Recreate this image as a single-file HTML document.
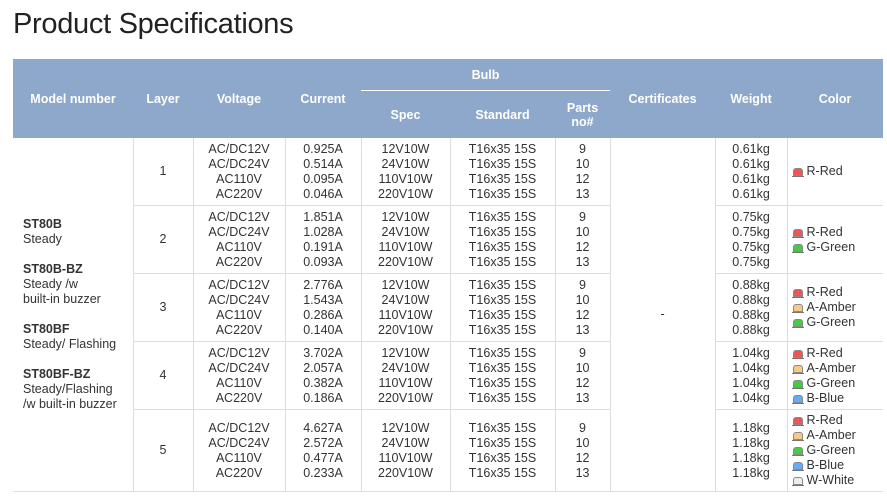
<!DOCTYPE html>
<html><head><meta charset="utf-8"><style>
body{margin:0;background:#fff;font-family:"Liberation Sans",sans-serif;color:#333;width:887px;height:501px;overflow:hidden}
h1{position:absolute;left:13px;top:8px;margin:0;font-weight:normal;font-size:29px;color:#222;letter-spacing:-0.3px}
table{position:absolute;left:13px;top:59px;width:870px;border-collapse:collapse;table-layout:fixed;font-size:12.5px}
th{background:#8ea8cb;color:#fff;font-weight:bold;font-size:12.5px;padding:0}
td{text-align:center;line-height:15px;padding:0;border-left:1px solid #ddd;border-bottom:1px solid #ddd;vertical-align:middle}
td.m{text-align:left;padding-left:10px;border-left:none;line-height:15px}
td.c{text-align:left;padding-left:5px}
tr.r td{height:67px}
tr.r5 td{height:81px}
.l{display:inline-block;width:8px;height:6px;border:1px solid #888;border-radius:3px 3px 0 0;margin-right:4px;vertical-align:-1px;position:relative}
.l:after{content:"";position:absolute;left:-2px;right:-2px;bottom:-2px;height:1px;background:#777}
.R{background:#e55}.A{background:#f5c98a}.G{background:#4c4}.B{background:#6af}.W{background:#eee}
b{color:#333}
</style></head><body>
<h1>Product Specifications</h1>
<table>
<colgroup><col style="width:120px"><col style="width:60px"><col style="width:92px"><col style="width:76px"><col style="width:89px"><col style="width:105px"><col style="width:55px"><col style="width:105px"><col style="width:72px"><col style="width:96px"></colgroup>
<tr><th rowspan="2" style="height:79px">Model number</th><th rowspan="2">Layer</th><th rowspan="2">Voltage</th><th rowspan="2">Current</th><th colspan="3" style="height:31px;border-bottom:1px solid #fff">Bulb</th><th rowspan="2">Certificates</th><th rowspan="2">Weight</th><th rowspan="2">Color</th></tr>
<tr><th style="height:47px">Spec</th><th>Standard</th><th>Parts<br>no#</th></tr>
<tr class="r"><td rowspan="5" class="m"><b>ST80B</b><br>Steady<br><br><b>ST80B-BZ</b><br>Steady /w<br>built-in buzzer<br><br><b>ST80BF</b><br>Steady/ Flashing<br><br><b>ST80BF-BZ</b><br>Steady/Flashing<br>/w built-in buzzer</td>
<td>1</td><td>AC/DC12V<br>AC/DC24V<br>AC110V<br>AC220V</td><td>0.925A<br>0.514A<br>0.095A<br>0.046A</td><td>12V10W<br>24V10W<br>110V10W<br>220V10W</td><td>T16x35 15S<br>T16x35 15S<br>T16x35 15S<br>T16x35 15S</td><td>9<br>10<br>12<br>13</td><td rowspan="5">-</td><td>0.61kg<br>0.61kg<br>0.61kg<br>0.61kg</td><td class="c"><span class="l R"></span>R-Red</td></tr>
<tr class="r"><td>2</td><td>AC/DC12V<br>AC/DC24V<br>AC110V<br>AC220V</td><td>1.851A<br>1.028A<br>0.191A<br>0.093A</td><td>12V10W<br>24V10W<br>110V10W<br>220V10W</td><td>T16x35 15S<br>T16x35 15S<br>T16x35 15S<br>T16x35 15S</td><td>9<br>10<br>12<br>13</td><td>0.75kg<br>0.75kg<br>0.75kg<br>0.75kg</td><td class="c"><span class="l R"></span>R-Red<br><span class="l G"></span>G-Green</td></tr>
<tr class="r"><td>3</td><td>AC/DC12V<br>AC/DC24V<br>AC110V<br>AC220V</td><td>2.776A<br>1.543A<br>0.286A<br>0.140A</td><td>12V10W<br>24V10W<br>110V10W<br>220V10W</td><td>T16x35 15S<br>T16x35 15S<br>T16x35 15S<br>T16x35 15S</td><td>9<br>10<br>12<br>13</td><td>0.88kg<br>0.88kg<br>0.88kg<br>0.88kg</td><td class="c"><span class="l R"></span>R-Red<br><span class="l A"></span>A-Amber<br><span class="l G"></span>G-Green</td></tr>
<tr class="r"><td>4</td><td>AC/DC12V<br>AC/DC24V<br>AC110V<br>AC220V</td><td>3.702A<br>2.057A<br>0.382A<br>0.186A</td><td>12V10W<br>24V10W<br>110V10W<br>220V10W</td><td>T16x35 15S<br>T16x35 15S<br>T16x35 15S<br>T16x35 15S</td><td>9<br>10<br>12<br>13</td><td>1.04kg<br>1.04kg<br>1.04kg<br>1.04kg</td><td class="c"><span class="l R"></span>R-Red<br><span class="l A"></span>A-Amber<br><span class="l G"></span>G-Green<br><span class="l B"></span>B-Blue</td></tr>
<tr class="r5"><td>5</td><td>AC/DC12V<br>AC/DC24V<br>AC110V<br>AC220V</td><td>4.627A<br>2.572A<br>0.477A<br>0.233A</td><td>12V10W<br>24V10W<br>110V10W<br>220V10W</td><td>T16x35 15S<br>T16x35 15S<br>T16x35 15S<br>T16x35 15S</td><td>9<br>10<br>12<br>13</td><td>1.18kg<br>1.18kg<br>1.18kg<br>1.18kg</td><td class="c"><span class="l R"></span>R-Red<br><span class="l A"></span>A-Amber<br><span class="l G"></span>G-Green<br><span class="l B"></span>B-Blue<br><span class="l W"></span>W-White</td></tr>
</table>
</body></html>
